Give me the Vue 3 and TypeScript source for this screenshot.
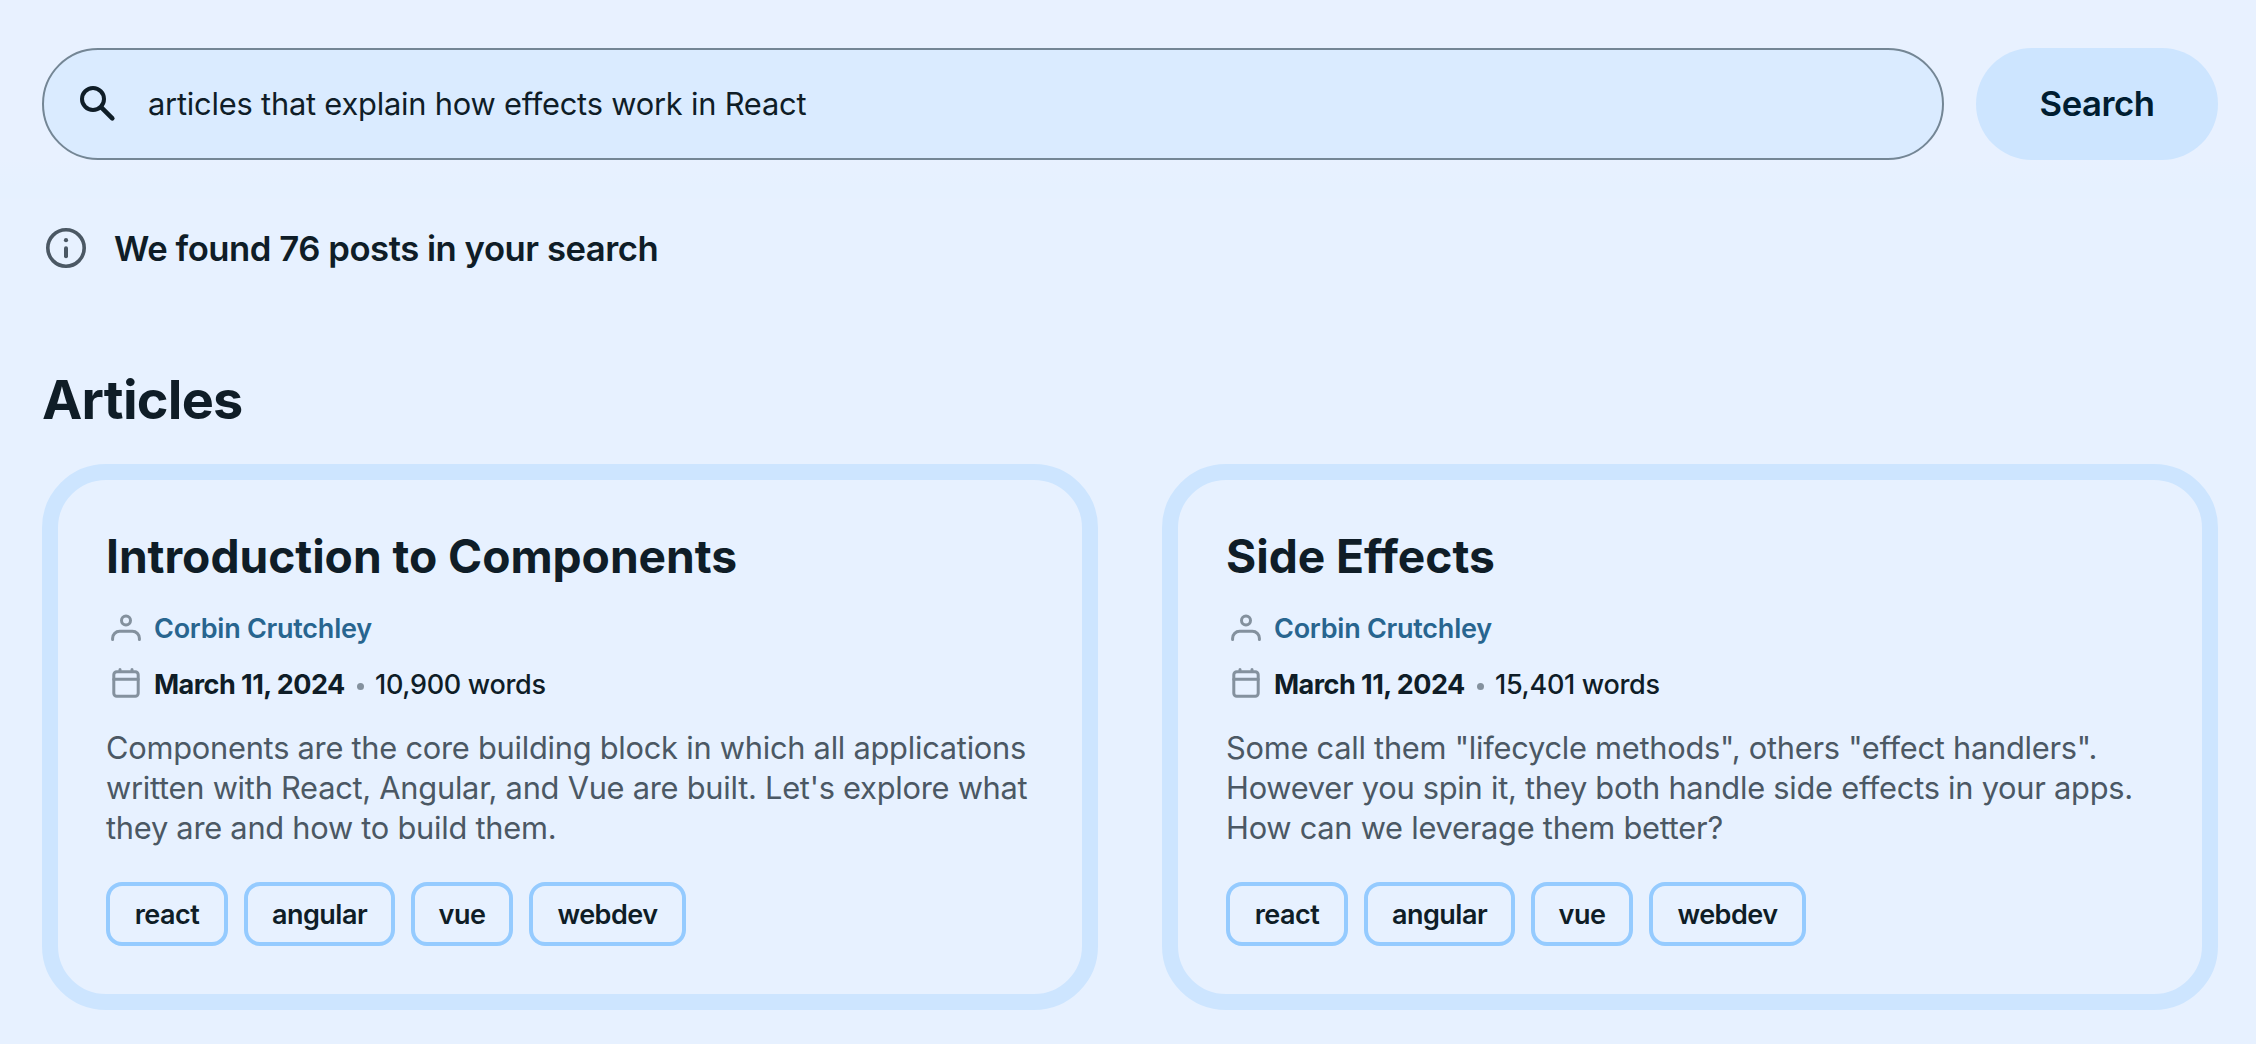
<script setup lang="ts">
import { ref } from 'vue'

interface Tag { label: string; width: number }
interface Article { title: string; author: string; date: string; words: string; lines: string[]; tags: Tag[] }

const query = ref('articles that explain how effects work in React')

const tags: Tag[] = [
  { label: 'react', width: 122 },
  { label: 'angular', width: 151 },
  { label: 'vue', width: 102 },
  { label: 'webdev', width: 157 },
]

const articles: Article[] = [
  {
    title: 'Introduction to Components',
    author: 'Corbin Crutchley',
    date: 'March 11, 2024',
    words: '10,900 words',
    lines: [
      'Components are the core building block in which all applications',
      "written with React, Angular, and Vue are built. Let's explore what",
      'they are and how to build them.',
    ],
    tags,
  },
  {
    title: 'Side Effects',
    author: 'Corbin Crutchley',
    date: 'March 11, 2024',
    words: '15,401 words',
    lines: [
      'Some call them "lifecycle methods", others "effect handlers".',
      'However you spin it, they both handle side effects in your apps.',
      'How can we leverage them better?',
    ],
    tags,
  },
]
</script>

<template>
  <main class="page">
    <form class="search" @submit.prevent>
      <label class="field">
        <svg class="field-icon" viewBox="0 0 36 36" fill="none" stroke="currentColor" stroke-linecap="round">
          <circle cx="13" cy="13" r="11" stroke-width="4" />
          <path d="M21.3 21.3L32.3 32.3" stroke-width="4.6" />
        </svg>
        <input v-model="query" class="input" type="text" aria-label="Search" />
      </label>
      <button class="submit" type="submit">Search</button>
    </form>

    <p class="status">
      <svg class="status-icon" viewBox="0 0 48 48" fill="none" stroke="currentColor">
        <circle cx="24" cy="24" r="18.2" stroke-width="3.6" />
        <path d="M24 24.2v8" stroke-width="4" stroke-linecap="round" />
        <circle cx="24" cy="16.2" r="2.1" fill="currentColor" stroke="none" />
      </svg>
      <span>We found 76 posts in your search</span>
    </p>

    <h1 class="heading">Articles</h1>

    <section class="cards">
      <article v-for="a in articles" :key="a.title" class="card">
        <h2 class="title">{{ a.title }}</h2>
        <div class="row author">
          <svg class="icon" viewBox="0 0 40 40" fill="none" stroke="currentColor" stroke-width="3" stroke-linecap="round">
            <circle cx="20" cy="12.6" r="4.5" />
            <path d="M6.6 31.6v-1.3a7 7 0 0 1 7-7h12.8a7 7 0 0 1 7 7v1.3" />
          </svg>
          <a class="name">{{ a.author }}</a>
        </div>
        <div class="row date">
          <svg class="icon" viewBox="0 0 40 40" fill="none" stroke="currentColor" stroke-width="3" stroke-linecap="round">
            <rect x="7.8" y="7.7" width="24.4" height="24.5" rx="3" />
            <path d="M7.8 15.3h24.4M14 5.4v2M26 5.4v2" />
          </svg>
          <span class="day">{{ a.date }}</span>
          <i class="dot"></i>
          <span class="words">{{ a.words }}</span>
        </div>
        <p class="desc"><span v-for="l in a.lines" :key="l" class="line">{{ l }}</span></p>
        <ul class="tags">
          <li v-for="t in a.tags" :key="t.label" class="tag" :style="{ width: t.width + 'px' }">{{ t.label }}</li>
        </ul>
      </article>
    </section>
  </main>
</template>

<style>
body { background: #e7f1ff; }
</style>

<style scoped>
.page {
  box-sizing: border-box;
  min-height: 1044px;
  padding: 48px 38px 34px 42px;
  background: linear-gradient(#e8f1ff 0, #e8f1ff 158px, #e6f1ff 186px, #e6f1ff 198px, #e7f1ff 199px);
  color: #0f1d27;
  font-family: Inter, "Liberation Sans", sans-serif;
}
.search { display: flex; gap: 32px; height: 112px; }
.field {
  box-sizing: border-box;
  flex: 1;
  display: flex;
  align-items: center;
  padding-left: 36px;
  border: 2px solid #748695;
  border-radius: 56px;
  background: #daebff;
}
.field-icon { width: 36px; height: 36px; margin-right: 32px; }
.input {
  flex: 1;
  padding: 0;
  border: 0;
  outline: 0;
  background: none;
  color: inherit;
  font: 400 30.8px/40px Inter, sans-serif;
  letter-spacing: -0.2px;
}
.submit {
  width: 242px;
  padding: 0 0 2px;
  border: 0;
  border-radius: 56px;
  background: #cde5ff;
  color: #001d31;
  font: 600 34.7px/44px Inter, sans-serif;
  letter-spacing: -0.5px;
}
.status {
  display: flex;
  align-items: center;
  gap: 24px;
  height: 48px;
  margin: 64px 0 0;
  font-size: 34.7px;
  font-weight: 600;
  letter-spacing: -0.47px;
}
.status-icon { width: 48px; height: 48px; color: #4b5864; }
.heading { margin: 92px 0 28px; font-size: 54px; font-weight: 700; line-height: 72px; letter-spacing: -0.75px; }
.cards { display: grid; grid-template-columns: 1fr 1fr; gap: 64px; }
.card { padding: 48px; border: 16px solid #cde5ff; border-radius: 64px; }
.title { margin: 0; font-size: 46.2px; font-weight: 700; line-height: 56px; letter-spacing: -0.05px; }
.row { display: flex; align-items: center; height: 40px; font-size: 27px; line-height: 40px; white-space: nowrap; }
.author { margin-top: 24px; }
.date { margin-top: 16px; }
.icon { width: 40px; height: 40px; margin-right: 8px; color: #84919e; }
.name { padding-top: 1px; color: #28658f; font-weight: 600; letter-spacing: -0.25px; }
.day { width: 191px; padding-top: 1px; font-weight: 700; letter-spacing: -0.53px; }
.dot { width: 7px; height: 7px; margin: 4px 11px 0 12px; border-radius: 50%; background: #84919e; }
.words { padding-top: 1px; font-weight: 500; letter-spacing: -0.3px; }
.desc { margin: 24px 0 34px; color: #4b5864; font-size: 30.8px; line-height: 40px; letter-spacing: -0.25px; white-space: nowrap; }
.line { display: block; }
.tags { display: flex; gap: 16px; margin: 0; padding: 0; list-style: none; }
.tag {
  box-sizing: border-box;
  height: 64px;
  border: 4px solid #95cbff;
  border-radius: 16px;
  font-size: 27px;
  font-weight: 600;
  line-height: 57px;
  letter-spacing: -0.5px;
  text-align: center;
}
</style>
